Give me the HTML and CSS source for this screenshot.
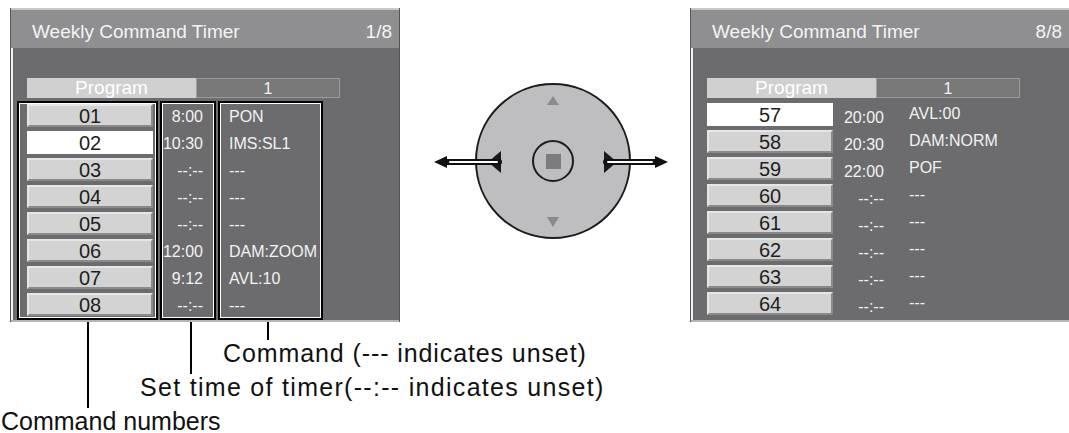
FILE: index.html
```html
<!DOCTYPE html>
<html lang="en">
<head>
    <meta charset="UTF-8">
    <meta name="viewport" content="width=device-width, initial-scale=1.0">
    <title>Weekly Command Timer</title>
    <link rel="stylesheet" href="styles.css">
</head>
<body>
    <div class="figure">
        <div class="top">

            <!-- screen 1/8 -->
            <section class="screen screen-left">
                <div class="title-bar"><span>Weekly Command Timer</span><span>1/8</span></div>
                <div class="screen-body">
                    <div class="program"><span class="program-label">Program</span><span class="program-value">1</span></div>
                    <div class="frames">
                        <div class="frame frame-num">
                            <div class="num">01</div>
                            <div class="num selected">02</div>
                            <div class="num">03</div>
                            <div class="num">04</div>
                            <div class="num">05</div>
                            <div class="num">06</div>
                            <div class="num">07</div>
                            <div class="num">08</div>
                        </div>
                        <div class="frame frame-time">
                            <div class="cell">8:00</div>
                            <div class="cell">10:30</div>
                            <div class="cell">--:--</div>
                            <div class="cell">--:--</div>
                            <div class="cell">--:--</div>
                            <div class="cell">12:00</div>
                            <div class="cell">9:12</div>
                            <div class="cell">--:--</div>
                        </div>
                        <div class="frame frame-cmd">
                            <div class="cell">PON</div>
                            <div class="cell">IMS:SL1</div>
                            <div class="cell">---</div>
                            <div class="cell">---</div>
                            <div class="cell">---</div>
                            <div class="cell">DAM:ZOOM</div>
                            <div class="cell">AVL:10</div>
                            <div class="cell">---</div>
                        </div>
                    </div>
                </div>
            </section>

            <!-- remote control pad -->
            <svg class="dial" width="240" height="160" viewBox="0 0 240 160">
                <circle cx="123" cy="81" r="77" fill="#bebec0" stroke="#1c1c1c" stroke-width="2"/>
                <polygon points="117,25 129,25 123,16" fill="#8a8a8c"/>
                <polygon points="117,137 129,137 123,147" fill="#8a8a8c"/>
                <circle cx="123" cy="81" r="20" fill="none" stroke="#1c1c1c" stroke-width="2"/>
                <rect x="116" y="74" width="15" height="15" fill="#7c7c7e"/>
                <polygon points="71,71 71,93 58,82" fill="#1a1a1a"/>
                <polygon points="174,71 174,93 187,82" fill="#1a1a1a"/>
                <line x1="14" y1="82" x2="69" y2="82" stroke="#111" stroke-width="6" stroke-linecap="round"/>
                <line x1="20" y1="82" x2="67" y2="82" stroke="#fff" stroke-width="2" stroke-linecap="round"/>
                <polygon points="4,82 17,76 17,88" fill="#111"/>
                <line x1="176" y1="82" x2="228" y2="82" stroke="#111" stroke-width="6" stroke-linecap="round"/>
                <line x1="178" y1="82" x2="222" y2="82" stroke="#fff" stroke-width="2" stroke-linecap="round"/>
                <polygon points="238,82 225,76 225,88" fill="#111"/>
            </svg>

            <!-- screen 8/8 -->
            <section class="screen screen-right">
                <div class="title-bar"><span>Weekly Command Timer</span><span>8/8</span></div>
                <div class="screen-body">
                    <div class="program"><span class="program-label">Program</span><span class="program-value">1</span></div>
                    <div class="list">
                        <div class="row"><div class="num selected">57</div><div class="time">20:00</div><div class="cmd">AVL:00</div></div>
                        <div class="row"><div class="num">58</div><div class="time">20:30</div><div class="cmd">DAM:NORM</div></div>
                        <div class="row"><div class="num">59</div><div class="time">22:00</div><div class="cmd">POF</div></div>
                        <div class="row"><div class="num">60</div><div class="time">--:--</div><div class="cmd">---</div></div>
                        <div class="row"><div class="num">61</div><div class="time">--:--</div><div class="cmd">---</div></div>
                        <div class="row"><div class="num">62</div><div class="time">--:--</div><div class="cmd">---</div></div>
                        <div class="row"><div class="num">63</div><div class="time">--:--</div><div class="cmd">---</div></div>
                        <div class="row"><div class="num">64</div><div class="time">--:--</div><div class="cmd">---</div></div>
                    </div>
                </div>
            </section>
        </div>

        <!-- callouts -->
        <div class="notes">
            <span class="lead lead-cmd"></span>
            <span class="lead lead-time"></span>
            <span class="lead lead-num"></span>
            <p class="note note-cmd">Command (--- indicates unset)</p>
            <p class="note note-time">Set time of timer(--:-- indicates unset)</p>
            <p class="note note-num">Command numbers</p>
        </div>
    </div>
</body>
</html>
```

FILE: styles.css
```css
/* general */
body {
    margin: 0;
    background: #fff;
    font-family: "Liberation Sans", Arial, sans-serif;
    overflow: hidden;
}

.figure {
    width: 1069px;
    height: 433px;
}

.top {
    display: flex;
    align-items: flex-start;
    padding-top: 8px;
}

/* screens */
.screen {
    box-sizing: border-box;
    height: 314px;
    border-left: 1px solid #555;
    background: #6c6c6f;
    display: flex;
    flex-direction: column;
}

.screen-left {
    width: 390px;
    margin-left: 10px;
    border-right: 1px solid #555;
}

.screen-right {
    flex: 1;
    min-width: 0;
}

.title-bar {
    box-sizing: border-box;
    height: 40px;
    border-top: 2px solid #c9c9c9;
    background: #8f8f91;
    color: #f4f4f4;
    font-size: 19px;
    display: flex;
    align-items: center;
    justify-content: space-between;
    padding: 5px 7px 0 21px;
}

.screen-body {
    flex: 1;
    box-shadow: inset 2px 0 0 #f2f2f2;
    border-bottom: 2px solid #b4b4b4;
    padding: 30px 0 0 6px;
}

.screen-right .screen-body {
    padding-left: 16px;
}

/* program bar */
.program {
    display: flex;
    width: 313px;
    height: 20px;
    margin-left: 10px;
    font-size: 19px;
    line-height: 20px;
}

.screen-right .program {
    margin-left: 0;
}

.program-label {
    width: 169px;
    background: #d0d0d0;
    color: #fff;
    text-align: center;
}

.program-value {
    flex: 1;
    box-sizing: border-box;
    border: 1px solid #9c9c9c;
    background: #787879;
    color: #f2f2f2;
    text-align: center;
    font-size: 16px;
    line-height: 19px;
}

/* framed columns (screen 1/8) */
.frames {
    display: flex;
    gap: 2px;
    margin-top: 3px;
}

.frame {
    box-sizing: border-box;
    height: 219px;
    border: 2px solid #000;
    box-shadow: inset 0 0 0 1px #fff;
    padding-top: 1px;
    display: flex;
    flex-direction: column;
    gap: 4px;
}

.frame-num {
    width: 141px;
    padding-left: 8px;
}

.frame-time {
    width: 56px;
    padding-right: 11px;
    text-align: right;
}

.frame-cmd {
    width: 105px;
    padding-left: 9px;
}

.cell {
    height: 23px;
    line-height: 25px;
    color: #f2f2f2;
    font-size: 16px;
    white-space: nowrap;
}

/* command number buttons */
.num {
    box-sizing: border-box;
    width: 126px;
    height: 23px;
    border: 2px solid;
    border-color: #e6e6e6 #8a8a8a #8a8a8a #e6e6e6;
    background: #d3d3d3;
    color: #1e1e1e;
    text-align: center;
    font-size: 20px;
    line-height: 20px;
}

.num.selected {
    background: #fff;
    border-color: #fff;
}

/* plain list (screen 8/8) */
.list {
    display: flex;
    flex-direction: column;
    gap: 4px;
    margin-top: 5px;
}

.row {
    display: flex;
    height: 23px;
    color: #f2f2f2;
    font-size: 16px;
    white-space: nowrap;
}

.time {
    width: 51px;
    text-align: right;
    line-height: 29px;
}

.cmd {
    padding-left: 25px;
    line-height: 21px;
}

/* remote pad */
.dial {
    margin: 72px 20px 0 30px;
    flex-shrink: 0;
}

/* callouts */
.notes {
    position: relative;
    padding-top: 15px;
}

.lead {
    position: absolute;
    top: 0;
    width: 2px;
    background: #000;
}

.lead-cmd {
    left: 267px;
    height: 18px;
}

.lead-time {
    left: 190px;
    height: 52px;
}

.lead-num {
    left: 87px;
    height: 86px;
}

.note {
    margin: 0;
    font-size: 25px;
    line-height: 33px;
    color: #111;
    white-space: nowrap;
}

.note-cmd {
    padding-left: 223px;
    letter-spacing: 0.9px;
}

.note-time {
    padding-left: 140px;
    letter-spacing: 1.3px;
    line-height: 35px;
}

.note-num {
    padding-left: 1px;
}
```
